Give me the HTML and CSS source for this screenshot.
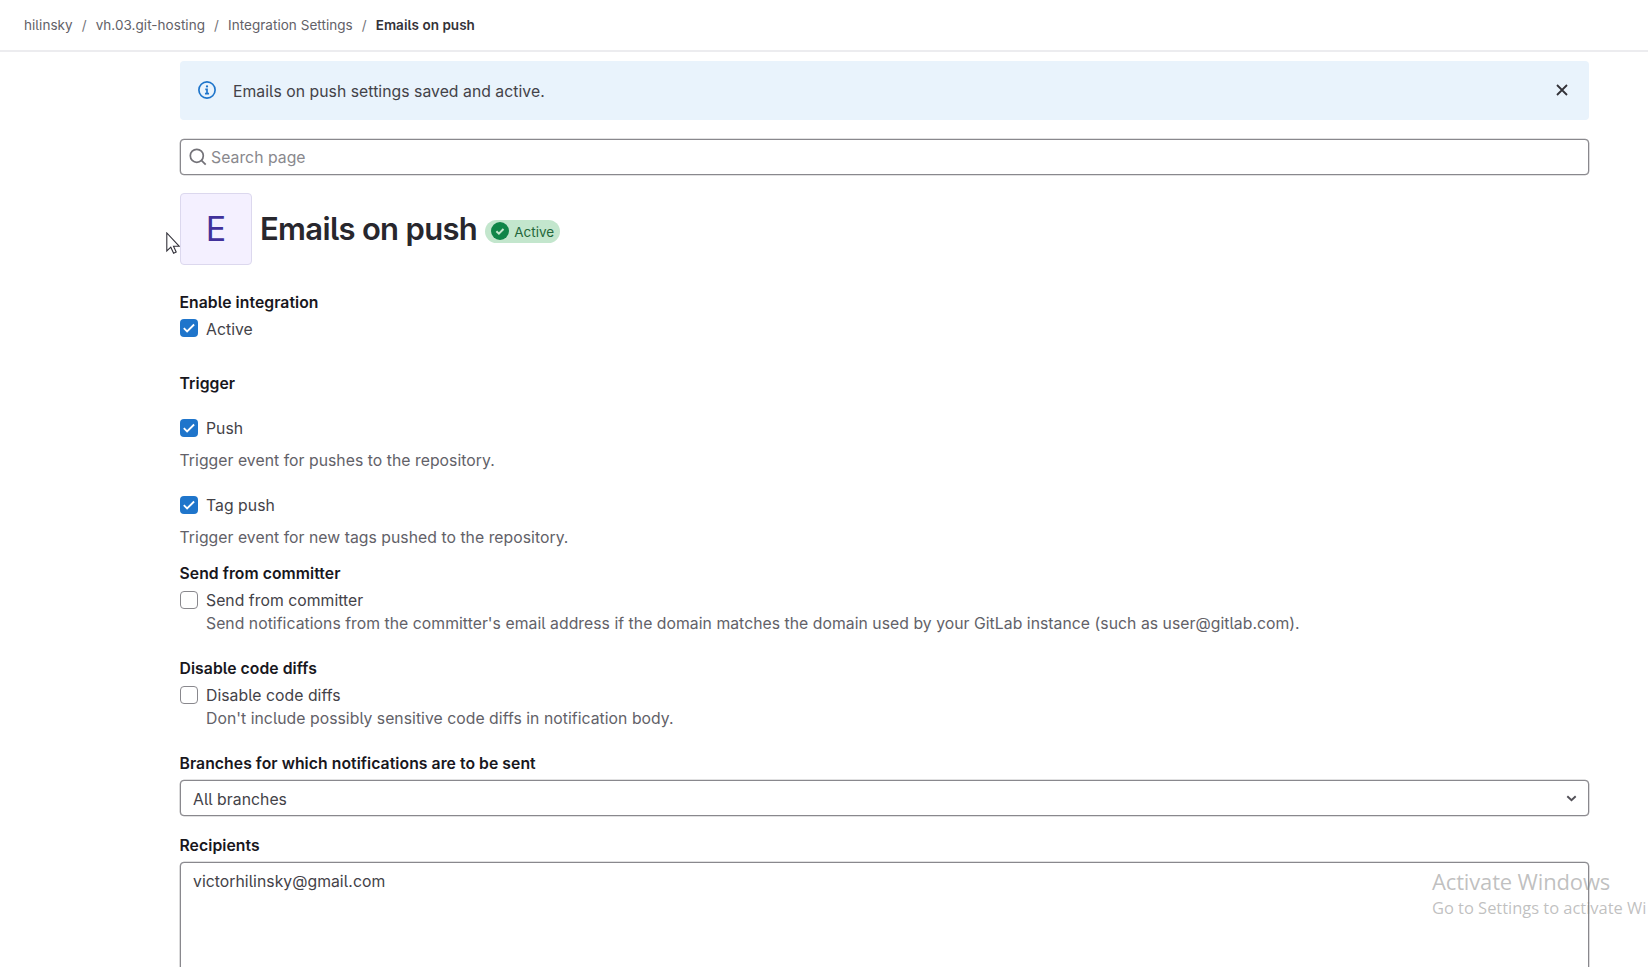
FILE: index.html
```html
<!DOCTYPE html>
<html lang="en">
<head>
<meta charset="utf-8">
<title>Emails on push</title>
<link rel="stylesheet" href="styles.css">
</head>
<body>
<header class="topbar">
  <nav class="crumbs">
    <a>hilinsky</a><span class="sep">/</span><a>vh.03.git-hosting</a><span class="sep">/</span><a>Integration Settings</a><span class="sep">/</span><a class="current">Emails on push</a>
  </nav>
</header>
<main class="content">
  <section class="alert">
    <svg class="alert-icon" viewBox="0 0 16 16"><circle cx="8" cy="8" r="7.2" fill="none" stroke="#1f75cb" stroke-width="1.5"/><circle cx="8" cy="4.8" r="1" fill="#1f75cb"/><path d="M6.5 7.5H8v3.7M6.2 11.3h3.6" fill="none" stroke="#1f75cb" stroke-width="1.5"/></svg>
    <p class="alert-text">Emails on push settings saved and active.</p>
    <svg class="close" viewBox="0 0 12 12"><path d="M1 1l10 10M11 1L1 11" fill="none" stroke="#333238" stroke-width="1.8"/></svg>
  </section>
  <div class="field search">
    <svg class="search-icon" viewBox="0 0 18 18"><circle cx="7.8" cy="7.8" r="6.5" fill="none" stroke="#737278" stroke-width="1.7"/><path d="M12.4 12.4l4.3 4.3" stroke="#737278" stroke-width="1.7"/></svg>
    <span class="placeholder">Search page</span>
  </div>
  <div class="title-row">
    <div class="avatar">E</div>
    <h1 class="title">Emails on push</h1>
    <span class="badge"><svg class="badge-icon" viewBox="0 0 18 18"><circle cx="9" cy="9" r="9" fill="#108548"/><path d="M5.4 9.2l2.5 2.4 4.6-4.6" fill="none" stroke="#c3e6cd" stroke-width="2"/></svg><span class="badge-text">Active</span></span>
  </div>
  <form class="form">
    <div class="label enable">Enable integration</div>
    <div class="check"><span class="box on first"><svg viewBox="0 0 18 18"><path d="M3.8 9.2l3.3 3.3 7-7" fill="none" stroke="#fff" stroke-width="1.8"/></svg></span><span class="check-text">Active</span></div>
    <div class="label trigger">Trigger</div>
    <div class="check push"><span class="box on"><svg viewBox="0 0 18 18"><path d="M3.8 9.2l3.3 3.3 7-7" fill="none" stroke="#fff" stroke-width="1.8"/></svg></span><span class="check-text">Push</span></div>
    <p class="help event">Trigger event for pushes to the repository.</p>
    <div class="check tag"><span class="box on"><svg viewBox="0 0 18 18"><path d="M3.8 9.2l3.3 3.3 7-7" fill="none" stroke="#fff" stroke-width="1.8"/></svg></span><span class="check-text">Tag push</span></div>
    <p class="help event">Trigger event for new tags pushed to the repository.</p>
    <div class="label send">Send from committer</div>
    <div class="check"><span class="box"></span><span class="check-text">Send from committer</span></div>
    <p class="help inset">Send notifications from the committer's email address if the domain matches the domain used by your GitLab instance (such as user@gitlab.com).</p>
    <div class="label group">Disable code diffs</div>
    <div class="check"><span class="box"></span><span class="check-text">Disable code diffs</span></div>
    <p class="help inset">Don't include possibly sensitive code diffs in notification body.</p>
    <div class="label group">Branches for which notifications are to be sent</div>
    <div class="field select"><span>All branches</span><svg class="chevron" viewBox="0 0 10 7"><path d="M.8 1.2L5 5.2l4.2-4" fill="none" stroke="#535158" stroke-width="1.9"/></svg></div>
    <div class="label recipients">Recipients</div>
    <div class="field textarea">victorhilinsky@gmail.com</div>
  </form>
</main>
<svg class="cursor" viewBox="0 0 14 22"><path d="M.8 1v18l4-3.8 2.8 6 2.6-1.2-2.7-5.8h5.6z" fill="#fff" stroke="#33323a" stroke-width="1.1"/></svg>
<aside class="watermark"><div class="wm-title">Activate Windows</div><div class="wm-text">Go to Settings to activate Wi</div></aside>
</body>
</html>
```
FILE: styles.css
```css
* { box-sizing: border-box; }
html, body { margin: 0; height: 967px; overflow: hidden; }
body {
  position: relative;
  background: #fff;
  color: #434248;
  font-family: Inter, "Liberation Sans", sans-serif;
  font-size: 15.75px;
  line-height: 24px;
  letter-spacing: .038px;
  font-feature-settings: "cv05";
}
p, h1 { margin: 0; }
.topbar { height: 52px; border-bottom: 2px solid #ececef; padding: 13px 24px 0; }
.crumbs { display: flex; font-size: 13.5px; color: #626168; white-space: nowrap; }
.sep { width: 23px; text-align: center; color: #737278; }
.current { font-weight: 600; color: #333238; }
.content { margin: 9px 59px 0 180px; }
.alert { height: 59px; background: #e9f3fc; border-radius: 4px; display: flex; align-items: center; padding: 0 21px 0 18px; }
.alert-icon { width: 18px; height: 18px; margin: 0 17px 2px 0; }
.alert-text { flex: 1; padding-top: 2px; }
.close { width: 12px; height: 12px; margin-bottom: 2px; }
.field { border: 1px solid #89888d; border-radius: 4px; background: #fff; box-shadow: 0 0 0 .3px #89888d; }
.search { margin-top: 19px; height: 36px; display: flex; align-items: center; padding-left: 8px; }
.search-icon { width: 18px; height: 18px; margin-bottom: 1px; }
.placeholder { margin-left: 4px; padding-top: 2px; color: #89888d; }
.title-row { margin-top: 18px; display: flex; height: 72px; align-items: center; }
.avatar { width: 72px; height: 72px; border: 1px solid #dcd8ee; border-radius: 4px; background: #f4f0ff; color: #41319b; font-size: 34px; display: flex; align-items: center; justify-content: center; }
.title { margin-left: 8px; font-size: 31px; font-weight: 600; line-height: 40px; letter-spacing: -.68px; color: #28272d; white-space: nowrap; }
.badge { margin: 4px 0 0 8px; width: 75px; height: 23px; border-radius: 12px; background: #c3e6cd; color: #24663b; font-size: 13.5px; display: flex; align-items: center; padding-left: 6px; }
.badge-icon { width: 18px; height: 18px; margin-right: 5px; }
.badge-text { padding-top: 2px; }
.label { font-weight: 600; color: #18171d; height: 24px; letter-spacing: .05px; margin-left: -.5px; }
.enable { margin-top: 26px; }
.check { display: flex; height: 24px; margin-top: 3px; }
.box { width: 18px; height: 18px; margin: 2px 8px 0 0; border: 1px solid #89888d; border-radius: 4px; flex: none; }
.on { border: 0; background: #1f75cb; }
.first { margin-top: 1px; }
.on svg { display: block; width: 18px; height: 18px; }
.trigger { margin-top: 30px; }
.push { margin-top: 21px; }
.help { color: #626168; white-space: nowrap; }
.event { margin-top: 8px; margin-left: -.5px; }
.tag { margin-top: 21px; }
.send { margin-top: 12px; }
.inset { margin: -1px 0 0 26px; }
.group { margin-top: 21px; }
.select { margin-top: 4px; height: 36px; display: flex; align-items: center; justify-content: space-between; padding: 3px 11px 0 12px; }
.chevron { width: 11px; height: 7px; margin-bottom: 3px; }
.recipients { margin-top: 18px; }
.textarea { margin-top: 4px; height: 130px; padding: 7px 12px; }
.cursor { position: absolute; left: 166px; top: 232px; width: 14px; height: 22px; }
.watermark { position: absolute; left: 1432px; top: 867px; width: 216px; white-space: nowrap; color: rgba(130, 130, 130, .5); font-family: "Open Sans", sans-serif; font-feature-settings: normal; }
.wm-title { font-size: 22px; line-height: 28px; letter-spacing: -.15px; }
.wm-text { font-size: 16.5px; line-height: 25px; letter-spacing: -.03px; }
```
